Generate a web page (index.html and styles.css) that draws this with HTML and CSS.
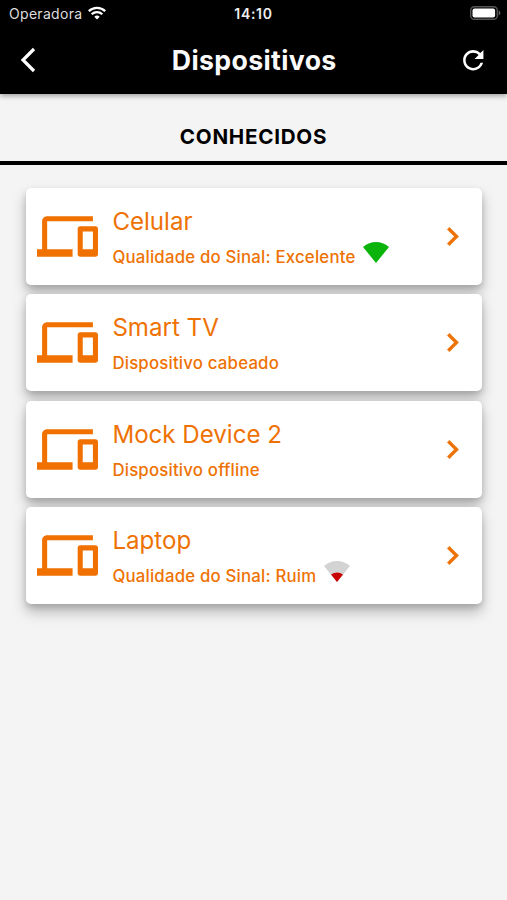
FILE: index.html
```html
<!DOCTYPE html>
<html lang="pt-BR">
<head>
<meta charset="utf-8">
<title>Dispositivos</title>
<link rel="stylesheet" href="styles.css">
</head>
<body>
<svg class="defs" aria-hidden="true">
  <symbol id="devices" viewBox="0 0 24 24"><path d="M4 6h18V4H4c-1.1 0-2 .9-2 2v11H0v3h14v-3H4V6zm19 2h-6c-.55 0-1 .45-1 1v10c0 .55.45 1 1 1h6c.55 0 1-.45 1-1V9c0-.55-.45-1-1-1zm-1 9h-4v-7h4v7z"/></symbol>
  <symbol id="chevron" viewBox="0 0 24 24"><path d="M10 6L8.59 7.41 13.17 12l-4.58 4.59L10 18l6-6z" stroke="#ee7203" stroke-width=".3"/></symbol>
</svg>
<header class="top">
  <div class="status">
    <div class="carrier"><span>Operadora</span>
      <svg class="wifi" viewBox="0 0 18 14" fill="none" stroke="#fff" stroke-width="2.3"><path d="M.8 5.1a11.8 11.8 0 0 1 16.4 0M3.7 8.2a7.6 7.6 0 0 1 10.6 0"/><path d="M9 13.6l-2.7-2.8a3.9 3.9 0 0 1 5.4 0z" fill="#fff" stroke="none"/></svg>
    </div>
    <span class="time">14:10</span>
    <svg class="battery" viewBox="0 0 31 14"><rect x=".7" y=".7" width="26.6" height="12.6" rx="3.6" fill="none" stroke="#555" stroke-width="1.4"/><rect x="2.5" y="2.4" width="22.6" height="9.2" rx="2" fill="#fff"/><path d="M28.7 4.6c2.2.8 2.2 4 0 4.8z" fill="#666"/></svg>
  </div>
  <div class="bar">
    <svg class="back" viewBox="0 0 16 26"><path d="M14 2L3 13l11 11" fill="none" stroke="#fff" stroke-width="3.2"/></svg>
    <h1>Dispositivos</h1>
    <svg class="refresh" viewBox="0 0 24 24" fill="#fff"><path d="M17.65 6.35A7.958 7.958 0 0 0 12 4c-4.42 0-7.99 3.58-7.99 8s3.57 8 7.99 8c3.73 0 6.84-2.55 7.73-6h-2.08A5.99 5.99 0 0 1 12 18c-3.31 0-6-2.69-6-6s2.69-6 6-6c1.66 0 3.14.69 4.22 1.78L13 11h7V4l-2.35 2.35z"/></svg>
  </div>
</header>
<h2>CONHECIDOS</h2>
<main class="list">
  <article class="card">
    <svg class="device"><use href="#devices"/></svg>
    <div class="info"><h3>Celular</h3><p><span>Qualidade do Sinal: Excelente</span><svg class="signal" viewBox="0 0 26 21"><path d="M0 5Q6 0 13 0t13 5L13 21z" fill="#0ab40a"/></svg></p></div>
    <svg class="chevron"><use href="#chevron"/></svg>
  </article>
  <article class="card">
    <svg class="device"><use href="#devices"/></svg>
    <div class="info"><h3>Smart TV</h3><p><span>Dispositivo cabeado</span></p></div>
    <svg class="chevron"><use href="#chevron"/></svg>
  </article>
  <article class="card">
    <svg class="device"><use href="#devices"/></svg>
    <div class="info"><h3>Mock Device 2</h3><p><span>Dispositivo offline</span></p></div>
    <svg class="chevron"><use href="#chevron"/></svg>
  </article>
  <article class="card">
    <svg class="device"><use href="#devices"/></svg>
    <div class="info"><h3>Laptop</h3><p><span>Qualidade do Sinal: Ruim</span><svg class="signal" viewBox="0 0 26 21"><path d="M0 5Q6 0 13 0t13 5L13 21z" fill="#d3d3d3"/><path d="M7 13.6q6-4 12 0L13 21z" fill="#c80000"/></svg></p></div>
    <svg class="chevron"><use href="#chevron"/></svg>
  </article>
</main>
</body>
</html>
```
FILE: styles.css
```css
* { box-sizing: border-box; }
body {
  margin: 0;
  min-height: 900px;
  background: #f4f4f4;
  font-family: Inter, "Liberation Sans", sans-serif;
}
h1, h2, h3, p { margin: 0; }
svg { display: block; flex: none; }
.defs { display: none; }
.top {
  height: 93.5px;
  background: #000;
  color: #fff;
  box-shadow: 0 2px 5px rgba(0, 0, 0, .35);
}
.status {
  height: 27px;
  display: grid;
  grid-template-columns: 1fr auto 1fr;
  align-items: center;
  padding: 0 6px 0 9px;
}
.carrier { display: flex; align-items: center; gap: 6px; font-size: 14px; letter-spacing: .3px; color: #ddd; }
.wifi { width: 18px; height: 14px; margin-top: -2px; }
.time { margin-left: -3px; font-size: 14px; font-weight: 600; letter-spacing: .7px; color: #eee; }
.battery { width: 31px; height: 14px; margin-top: -1px; justify-self: end; }
.bar {
  height: 66px;
  display: flex;
  align-items: center;
  justify-content: space-between;
  padding: 0 18px 0 20px;
}
.back { width: 16px; height: 26px; margin-right: 14px; }
.refresh { width: 30.5px; height: 30.5px; }
h1 { font-size: 26.7px; font-weight: 700; letter-spacing: .35px; line-height: 32px; color: #fafafa; }
h2 {
  height: 71px;
  padding-top: 30.5px;
  border-bottom: 4px solid #000;
  text-align: center;
  font-size: 20.6px;
  line-height: 26px;
  font-weight: 700;
  letter-spacing: .75px;
}
.list { display: flex; flex-direction: column; gap: 9.6px; padding: 23.5px 25px 0 26px; }
.card {
  height: 96.9px;
  display: flex;
  align-items: center;
  padding: 0 11.5px 0 10.6px;
  border-radius: 5px;
  background: #fff;
  color: #ee7203;
  box-shadow: 0 8px 14px rgba(0, 0, 0, .25), 0 3px 6px rgba(0, 0, 0, .14);
}
.device { width: 61px; height: 61px; fill: #f07000; }
.info { flex: 1; padding: 1.2px 0 0 14.8px; }
h3 { font-size: 24.1px; line-height: 32px; font-weight: 400; letter-spacing: 0; }
p { display: flex; height: 24px; margin-top: 7px; font-size: 16.8px; line-height: 24px; font-weight: 500; letter-spacing: .2px; white-space: nowrap; }
.signal { width: 26px; height: 21px; margin: -2.5px 0 0 7.5px; }
.chevron { width: 37px; height: 37px; fill: #ee7203; }
```
